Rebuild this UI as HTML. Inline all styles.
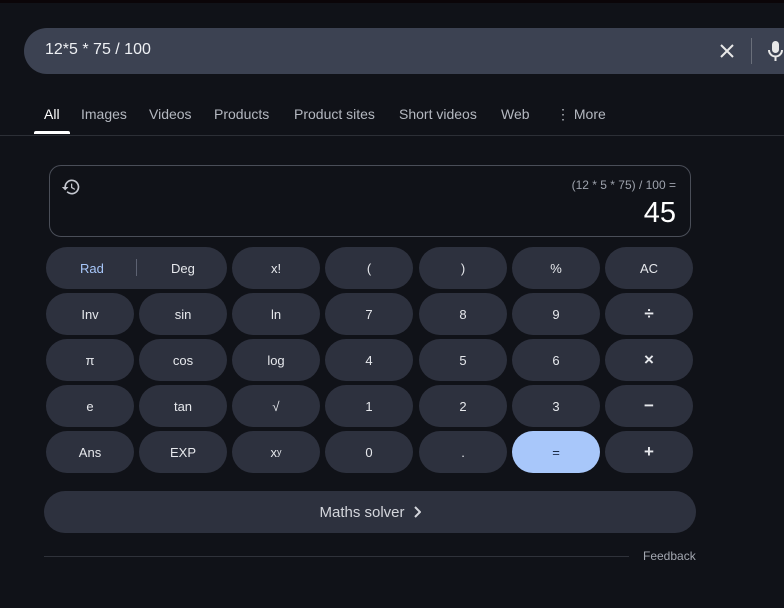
<!DOCTYPE html>
<html><head><meta charset="utf-8"><style>
*{margin:0;padding:0;box-sizing:border-box}
body{width:784px;height:608px;background:#101218;font-family:"Liberation Sans",sans-serif;position:relative;overflow:hidden;color:#e3e3e3}
.top{position:absolute;left:0;top:0;width:784px;height:3px;background:#0b0508}
.search{position:absolute;left:24px;top:28px;width:800px;height:46px;border-radius:23px;background:#3c4252}
.q{position:absolute;left:45px;top:41px;font-size:16px;color:#eef0f4}
.tabs span{position:absolute;top:106px;font-size:14px;color:#b4b8c0}
.line{position:absolute;left:0;top:135px;width:784px;height:1px;background:#2c2f36}
.disp{position:absolute;left:49px;top:165px;width:642px;height:72px;border:1px solid #4a4e58;border-radius:12px}
.b{position:absolute;width:88px;height:42px;border-radius:21px;background:#2d313e;color:#e6e8ec;font-size:13px;display:flex;align-items:center;justify-content:center}
.op{font-size:17px;font-weight:bold}
.solver{position:absolute;left:44px;top:491px;width:652px;height:42px;border-radius:21px;background:#2d313e;color:#d4d6dc;font-size:15px;display:flex;align-items:center;justify-content:center}
</style></head><body>
<div class="top"></div>
<div class="search"></div>
<div class="q">12*5 * 75 / 100</div>
<svg style="position:absolute;left:719px;top:43px" width="16" height="16" viewBox="0 0 16 16"><path d="M2 2L14 14M14 2L2 14" stroke="#e8e8e8" stroke-width="2"/></svg>
<div style="position:absolute;left:751px;top:38px;width:1px;height:26px;background:#6a6f7a"></div>
<svg style="position:absolute;left:767px;top:40px" width="17" height="22" viewBox="0 0 17 22"><rect x="5" y="1" width="7" height="12" rx="3.5" fill="#e8e8e8"/><path d="M2 10a6.5 6.5 0 0 0 13 0M8.5 16.5V21" stroke="#e8e8e8" stroke-width="2" fill="none"/></svg>
<div class="tabs">
<span style="left:44px;color:#fff">All</span>
<span style="left:81px">Images</span>
<span style="left:149px">Videos</span>
<span style="left:214px">Products</span>
<span style="left:294px">Product sites</span>
<span style="left:399px">Short videos</span>
<span style="left:501px">Web</span>
<span style="left:556px">⋮ More</span>
</div>
<div style="position:absolute;left:34px;top:131px;width:36px;height:3px;background:#fff;border-radius:2px 2px 0 0"></div>
<div class="line"></div>
<div class="disp"></div>
<svg style="position:absolute;left:61px;top:177px" width="20" height="20" viewBox="0 0 24 24"><path d="M13 3a9 9 0 0 0-9 9H1l4 4 4-4H6a7 7 0 1 1 2.05 4.95L6.64 18.36A9 9 0 1 0 13 3zm-1 5v5l4.25 2.52.77-1.28-3.52-2.09V8z" fill="#c4c7cf"/></svg>
<div style="position:absolute;right:108px;top:178px;font-size:12px;color:#9ea3ad">(12 * 5 * 75) / 100 =</div>
<div style="position:absolute;right:108px;top:197px;font-size:29px;color:#fff">45</div>

<div class="b" style="left:46px;top:247px;width:181px"><span style="color:#a8c7fa;position:absolute;left:34px">Rad</span><span style="position:absolute;left:90px;top:12px;width:1px;height:17px;background:#5d6272"></span><span style="position:absolute;left:125px">Deg</span></div>
<div class="b" style="left:232px;top:247px">x!</div>
<div class="b" style="left:325px;top:247px">(</div>
<div class="b" style="left:419px;top:247px">)</div>
<div class="b" style="left:512px;top:247px">%</div>
<div class="b" style="left:605px;top:247px">AC</div>

<div class="b" style="left:46px;top:293px">Inv</div>
<div class="b" style="left:139px;top:293px">sin</div>
<div class="b" style="left:232px;top:293px">ln</div>
<div class="b" style="left:325px;top:293px">7</div>
<div class="b" style="left:419px;top:293px">8</div>
<div class="b" style="left:512px;top:293px">9</div>
<div class="b op" style="left:605px;top:293px">÷</div>

<div class="b" style="left:46px;top:339px">π</div>
<div class="b" style="left:139px;top:339px">cos</div>
<div class="b" style="left:232px;top:339px">log</div>
<div class="b" style="left:325px;top:339px">4</div>
<div class="b" style="left:419px;top:339px">5</div>
<div class="b" style="left:512px;top:339px">6</div>
<div class="b op" style="left:605px;top:339px">×</div>

<div class="b" style="left:46px;top:385px">e</div>
<div class="b" style="left:139px;top:385px">tan</div>
<div class="b" style="left:232px;top:385px">√</div>
<div class="b" style="left:325px;top:385px">1</div>
<div class="b" style="left:419px;top:385px">2</div>
<div class="b" style="left:512px;top:385px">3</div>
<div class="b op" style="left:605px;top:385px">−</div>

<div class="b" style="left:46px;top:431px">Ans</div>
<div class="b" style="left:139px;top:431px">EXP</div>
<div class="b" style="left:232px;top:431px">x<sup style="font-size:9px">y</sup></div>
<div class="b" style="left:325px;top:431px">0</div>
<div class="b" style="left:419px;top:431px">.</div>
<div class="b" style="left:512px;top:431px;background:#a8c7fa;color:#1a2a44">=</div>
<div class="b op" style="left:605px;top:431px">+</div>

<div class="solver">Maths solver<svg style="margin-left:8px" width="8" height="12" viewBox="0 0 8 12"><path d="M2 1l5 5-5 5" stroke="#d4d6dc" stroke-width="2" fill="none"/></svg></div>
<div style="position:absolute;left:44px;top:556px;width:585px;height:1px;background:#2f323a"></div>
<div style="position:absolute;left:643px;top:549px;font-size:12px;color:#a4a8b1">Feedback</div>
</body></html>
